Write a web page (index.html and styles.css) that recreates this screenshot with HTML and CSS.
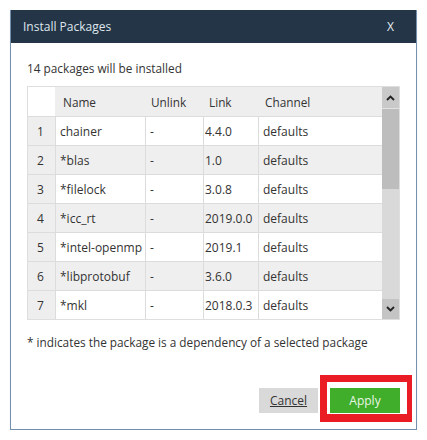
FILE: index.html
```html
<!DOCTYPE html>
<html>
<head>
<meta charset="utf-8">
<link rel="stylesheet" href="styles.css">
</head>
<body>
<div class="dialog">
  <div class="titlebar">
    <span class="title">Install Packages</span>
    <span class="close">X</span>
  </div>
  <div class="content">
    <p class="summary">14 packages will be installed</p>
    <div class="pkg-table">
      <div class="grid-wrap">
        <div class="head-row">
          <div class="hcell corner"></div>
          <div class="hcell name">Name</div>
          <div class="hcell unlink">Unlink</div>
          <div class="hcell link">Link</div>
          <div class="hcell channel">Channel</div>
        </div>
        <div class="rows">
          <div class="num">1</div><div class="cell name">chainer</div><div class="cell">-</div><div class="cell link">4.4.0</div><div class="cell">defaults</div>
          <div class="num">2</div><div class="cell alt name">*blas</div><div class="cell alt">-</div><div class="cell alt link">1.0</div><div class="cell alt">defaults</div>
          <div class="num">3</div><div class="cell name">*filelock</div><div class="cell">-</div><div class="cell link">3.0.8</div><div class="cell">defaults</div>
          <div class="num">4</div><div class="cell alt name">*icc_rt</div><div class="cell alt">-</div><div class="cell alt link">2019.0.0</div><div class="cell alt">defaults</div>
          <div class="num">5</div><div class="cell name">*intel-openmp</div><div class="cell">-</div><div class="cell link">2019.1</div><div class="cell">defaults</div>
          <div class="num">6</div><div class="cell alt name">*libprotobuf</div><div class="cell alt">-</div><div class="cell alt link">3.6.0</div><div class="cell alt">defaults</div>
          <div class="num">7</div><div class="cell name">*mkl</div><div class="cell">-</div><div class="cell link">2018.0.3</div><div class="cell">defaults</div>
        </div>
      </div>
      <div class="scrollbar">
        <div class="sb-btn up">
          <svg width="9" height="6" viewBox="0 0 9 6"><path d="M1 5 L4.5 1.5 L8 5" fill="none" stroke="#222" stroke-width="1.8"/></svg>
        </div>
        <div class="sb-thumb"></div>
        <div class="sb-track"></div>
        <div class="sb-btn down">
          <svg width="9" height="6" viewBox="0 0 9 6"><path d="M1 1 L4.5 4.5 L8 1" fill="none" stroke="#222" stroke-width="1.8"/></svg>
        </div>
      </div>
    </div>
    <p class="note">* indicates the package is a dependency of a selected package</p>
    <div class="actions">
      <button class="btn cancel">Cancel</button>
      <button class="btn apply">Apply</button>
      <div class="highlight"></div>
    </div>
  </div>
</div>
</body>
</html>
```
FILE: styles.css
```css
html, body {
  margin: 0;
  padding: 0;
  background: #ffffff;
}

body {
  font-family: "Open Sans", "Noto Sans", sans-serif;
  color: #333333;
}

.dialog {
  box-sizing: border-box;
  margin: 10px 0 0 10px;
  width: 407px;
  height: 420px;
  border: 1px solid #7390ad;
  border-top: none;
  display: flex;
  flex-direction: column;
  box-shadow: 0 1px 1px rgba(0, 0, 0, 0.12);
}

.titlebar {
  height: 33px;
  background: #243547;
  display: flex;
  align-items: center;
  justify-content: space-between;
  padding: 0 22px 0 12px;
  margin: 0 -1px;
  border-left: 1px solid #7390ad;
  border-right: 1px solid #7390ad;
  color: #dfe6ed;
  font-size: 12px;
}

.close {
  font-size: 12px;
  color: #e6ecf2;
}

.content {
  flex: 1;
  padding: 17px 15px 0 16px;
  position: relative;
}

.summary {
  margin: 0;
  font-size: 11.8px;
  line-height: 16px;
}

.pkg-table {
  margin-top: 10px;
  display: flex;
  width: 373px;
  height: 234px;
  border: 1px solid #dedede;
  box-sizing: border-box;
}

.grid-wrap {
  display: flex;
  flex-direction: column;
  background: #dcdcdc;
}

.head-row {
  display: grid;
  grid-template-columns: 27px 89px 58px 55px 125px;
  height: 29px;
  background: #eeeeee;
  margin-bottom: 1px;
  font-size: 11.8px;
}

.hcell {
  display: flex;
  align-items: center;
  padding-left: 8px;
}

.hcell.corner {
  background: #ffffff;
}

.hcell.unlink,
.hcell.link {
  padding-left: 7px;
}

.hcell.channel {
  padding-left: 8px;
}

.rows {
  display: grid;
  grid-template-columns: 27px 89px 57px 54px 123px;
  grid-auto-rows: 28px;
  gap: 1px;
  font-size: 12px;
}

.num {
  background: #eeeeee;
  display: flex;
  align-items: center;
  padding-left: 9px;
}

.cell {
  background: #ffffff;
  display: flex;
  align-items: center;
  padding-left: 4px;
  white-space: nowrap;
  overflow: hidden;
}

.cell.name {
  padding-left: 4px;
}

.cell.link {
  padding-left: 1px;
}

.cell.alt {
  background: #efefef;
}

.scrollbar {
  flex: 1;
  display: flex;
  flex-direction: column;
  background: #d9d9d9;
}

.sb-btn {
  display: flex;
  align-items: center;
  justify-content: center;
  background: #c9c9c9;
}

.sb-btn.up {
  height: 21px;
  border-bottom: 1px solid #e2e2e2;
}

.sb-btn.down {
  height: 20px;
  background: #c4c4c4;
}

.sb-thumb {
  height: 80px;
  background: #bdbdbd;
}

.sb-track {
  flex: 1;
}

.note {
  margin: 14px 0 0 0;
  font-size: 11.8px;
  line-height: 16px;
}

.actions {
  display: flex;
  justify-content: flex-end;
  gap: 12px;
  margin-top: 38px;
  width: 373px;
  position: relative;
}

.btn {
  border: none;
  height: 25px;
  font-family: "Open Sans", "Noto Sans", sans-serif;
  font-size: 12px;
  padding: 0;
  cursor: pointer;
}

.cancel {
  width: 59px;
  background: #d9d9d9;
  color: #333333;
  text-decoration: underline;
}

.apply {
  width: 70px;
  background: #40ad2b;
  color: #e9f6e4;
}

/* red callout frame around the Apply button */
.highlight {
  position: absolute;
  right: -12px;
  top: -13px;
  width: 92px;
  height: 47px;
  box-sizing: border-box;
  border-style: solid;
  border-color: #ea1c24;
  border-width: 7px 5px 8px 7px;
  pointer-events: none;
}
```
